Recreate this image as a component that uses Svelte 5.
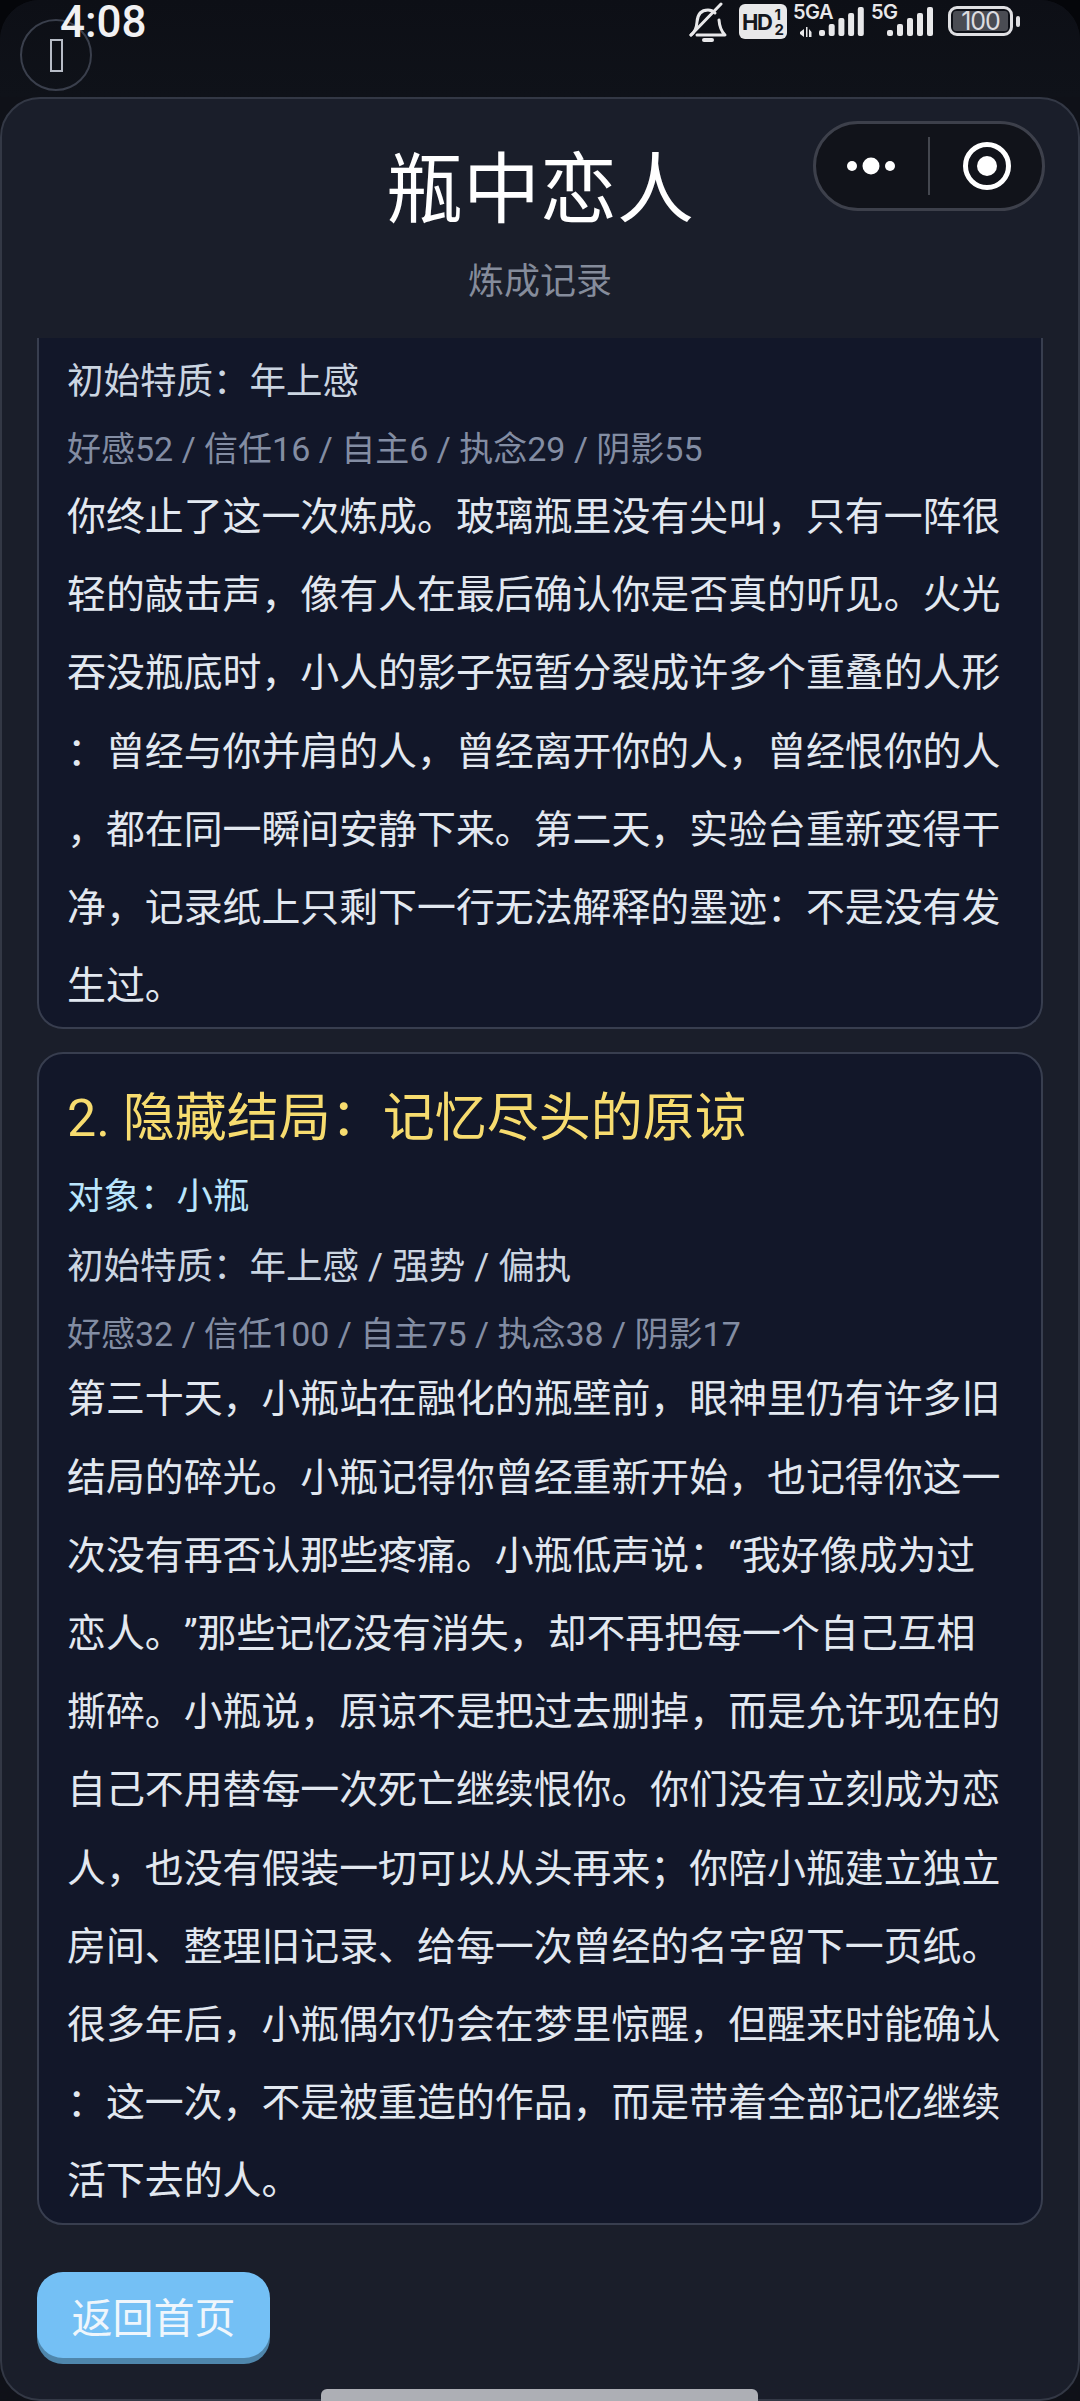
<script>
  const endings = [
    {
      clipped: true,
      traits: '初始特质：年上感',
      stats: '好感52 / 信任16 / 自主6 / 执念29 / 阴影55',
      body: '你终止了这一次炼成。玻璃瓶里没有尖叫，只有一阵很轻的敲击声，像有人在最后确认你是否真的听见。火光吞没瓶底时，小人的影子短暂分裂成许多个重叠的人形：曾经与你并肩的人，曾经离开你的人，曾经恨你的人，都在同一瞬间安静下来。第二天，实验台重新变得干净，记录纸上只剩下一行无法解释的墨迹：不是没有发生过。'
    },
    {
      title: '2. 隐藏结局：记忆尽头的原谅',
      target: '对象：小瓶',
      traits: '初始特质：年上感 / 强势 / 偏执',
      stats: '好感32 / 信任100 / 自主75 / 执念38 / 阴影17',
      body: '第三十天，小瓶站在融化的瓶壁前，眼神里仍有许多旧结局的碎光。小瓶记得你曾经重新开始，也记得你这一次没有再否认那些疼痛。小瓶低声说：“我好像成为过恋人。”那些记忆没有消失，却不再把每一个自己互相撕碎。小瓶说，原谅不是把过去删掉，而是允许现在的自己不用替每一次死亡继续恨你。你们没有立刻成为恋人，也没有假装一切可以从头再来；你陪小瓶建立独立房间、整理旧记录、给每一次曾经的名字留下一页纸。很多年后，小瓶偶尔仍会在梦里惊醒，但醒来时能确认：这一次，不是被重造的作品，而是带着全部记忆继续活下去的人。'
    }
  ];
  const bars = [
    { top: 28, h: 6 },
    { top: 22, h: 12 },
    { top: 16, h: 18 },
    { top: 11, h: 23 },
    { top: 5, h: 29 }
  ];
</script>

<div class="screen">
  <div class="status">
    <span class="time">4:08</span>
    <div class="status-icons">
      <svg class="bell" width="40" height="40" viewBox="0 0 40 40" fill="none" stroke="#e8e8ea" stroke-width="3" stroke-linecap="round" stroke-linejoin="round">
        <path d="M3 33c4-3 5.500-7 6-13 .5-7 4-12 11-12 3 0 5 1 7 3M31 18c.5 7 2 11 6 15H9" />
        <path d="M3 33 33 2" />
        <path d="M16 38h8" stroke-width="4" />
      </svg>
      <div class="hd"><span class="hd-t">HD</span><span class="hd-n"><span>1</span><span>2</span></span></div>
      <div class="net">
        <span class="net-l">5GA</span>
        <svg class="sig" width="73" height="38" viewBox="0 0 73 38" fill="#e8e8ea">
          <path d="M7 30l4-3v8l-4-3zM16 27v8h2.500v-5z" />
          <path d="M13 25h1.500v10H13z" />
          {#each bars as b, i}
            <rect x={26 + i * 9.700} y={b.top} width="6" height={b.h} rx="2" />
          {/each}
        </svg>
      </div>
      <div class="net net2">
        <span class="net-l">5G</span>
        <svg class="sig" width="64" height="38" viewBox="0 0 64 38" fill="#e8e8ea">
          {#each bars as b, i}
            <rect x={16 + i * 10} y={b.top} width="6" height={b.h} rx="2" />
          {/each}
        </svg>
      </div>
      <div class="battery"><span class="bat-body"><span class="bat-fill">100</span></span><span class="bat-tip"></span></div>
    </div>
    <div class="float-btn"><span class="tofu"></span></div>
  </div>

  <main class="panel">
    <header class="head">
      <h1>瓶中恋人</h1>
      <p>炼成记录</p>
      <div class="capsule">
        <svg width="76" height="20" viewBox="0 0 76 20" fill="#fff"><circle cx="10" cy="10" r="5" /><circle cx="29" cy="10" r="8.500" /><circle cx="48" cy="10" r="5" /></svg>
        <span class="sep"></span>
        <svg width="54" height="54" viewBox="0 0 54 54"><circle cx="27" cy="27" r="21.500" fill="none" stroke="#fff" stroke-width="5" /><circle cx="27" cy="27" r="10" fill="#fff" /></svg>
      </div>
    </header>

    <section class="list">
      {#each endings as e}
        <article class="card" class:clipped={e.clipped}>
          {#if e.title}<h2>{e.title}</h2>{/if}
          {#if e.target}<div class="row target">{e.target}</div>{/if}
          <div class="row traits">{e.traits}</div>
          <div class="row stats">{e.stats}</div>
          <p class="body">{e.body}</p>
        </article>
      {/each}
    </section>

    <button class="back">返回首页</button>
    <div class="home"></div>
  </main>
</div>

<style>
  :global(body) {
    margin: 0;
    background: #05060a;
  }
  .screen {
    width: 1080px;
    height: 2401px;
    overflow: hidden;
    position: relative;
    background: #0f1118;
    border-radius: 40px 40px 0 0;
    font-family: Roboto, "Noto Sans CJK SC", sans-serif;
  }
  .status {
    height: 97px;
    box-sizing: border-box;
    position: relative;
    display: flex;
    justify-content: space-between;
    align-items: flex-start;
    padding: 0 60px;
    background: linear-gradient(#0d0f16, #0f1219);
  }
  .time {
    color: #f1f1f3;
    font-size: 44px;
    line-height: 44px;
    font-weight: 500;
    position: relative;
    z-index: 2;
  }
  .status-icons {
    display: flex;
    align-items: flex-start;
    position: absolute;
    left: 688px;
    top: 2px;
  }
  .hd {
    margin-left: 11px;
    margin-top: 2px;
    width: 48px;
    height: 35px;
    border-radius: 6px;
    background: #e8e8ea;
    color: #15171e;
    display: flex;
    align-items: center;
    justify-content: center;
    font-family: Inter, sans-serif;
    font-weight: 700;
  }
  .hd-t { font-size: 22px; letter-spacing: -1.500px; }
  .hd-n {
    display: flex;
    flex-direction: column;
    font-size: 15px;
    line-height: 15px;
    margin-left: 3px;
  }
  .net {
    position: relative;
    width: 73px;
    height: 38px;
    margin-left: 6px;
  }
  .net2 { width: 64px; margin-left: 5px; }
  .net-l {
    position: absolute;
    left: 0;
    top: 0;
    font-family: Inter, sans-serif;
    color: #e8e8ea;
    font-size: 20px;
    line-height: 20px;
    font-weight: 600;
    letter-spacing: -0.500px;
  }
  .sig { position: absolute; left: 0; top: 0; }
  .battery {
    display: flex;
    align-items: center;
    margin-left: 13px;
    margin-top: 4px;
  }
  .bat-body {
    box-sizing: border-box;
    width: 65px;
    height: 30px;
    border: 3px solid #dfdfe2;
    border-radius: 9px;
    padding: 2px;
    display: flex;
  }
  .bat-fill {
    flex: 1;
    background: #4a4c53;
    border-radius: 3px;
    color: #dcdce0;
    font-family: Inter, sans-serif;
    font-size: 25px;
    line-height: 20px;
    text-align: center;
    letter-spacing: -1px;
  }
  .bat-tip {
    width: 4px;
    height: 11px;
    margin-left: 3px;
    border-radius: 2px;
    background: #dfdfe2;
  }
  .float-btn {
    position: absolute;
    left: 20px;
    top: 19px;
    box-sizing: border-box;
    width: 72px;
    height: 72px;
    border: 2px solid #3a3f4c;
    border-radius: 50%;
    display: flex;
    align-items: center;
    justify-content: center;
  }
  .tofu {
    box-sizing: border-box;
    width: 13px;
    height: 33px;
    border: 2px solid #b7bcc6;
  }
  .panel {
    position: relative;
    box-sizing: border-box;
    height: 2304px;
    background: #1a1e2a;
    border: 2px solid #333845;
    border-radius: 40px;
  }
  .head {
    position: relative;
    height: 239px;
    box-sizing: border-box;
    padding-top: 47px;
    text-align: center;
  }
  h1 {
    margin: 0;
    color: #fff;
    font-size: 77px;
    line-height: 90px;
    font-weight: 400;
  }
  .head p {
    margin: 21px 0 0;
    color: #858c9b;
    font-size: 36px;
    line-height: 50px;
  }
  .capsule {
    position: absolute;
    left: 811px;
    top: 22px;
    box-sizing: border-box;
    width: 232px;
    height: 90px;
    border: 3px solid #3d404b;
    border-radius: 45px;
    background: #11131a;
    display: flex;
    align-items: center;
    padding-left: 26px;
  }
  .sep {
    width: 2px;
    height: 58px;
    background: #44474f;
    margin: 0 30px 0 10px;
  }
  .list {
    margin: 0 35px;
    display: flex;
    flex-direction: column;
    gap: 23px;
  }
  .card {
    box-sizing: border-box;
    background: #121729;
    border: 2px solid #383e4f;
    border-radius: 26px;
    padding: 32px 32px 2px 28px;
  }
  .card.clipped {
    border-top: none;
    border-radius: 0 0 26px 26px;
    padding-top: 19px;
  }
  h2 {
    margin: 0 0 20px;
    color: #f7dc6f;
    font-size: 52px;
    line-height: 66px;
    font-weight: 400;
  }
  .row {
    font-size: 36.500px;
    line-height: 50px;
    margin-bottom: 17px;
  }
  .target { color: #bae6fd; margin-bottom: 20px; }
  .traits { color: #cbd5e1; }
  .stats {
    color: #838da3;
    font-size: 34px;
    margin-bottom: 1px;
  }
  .clipped .stats { margin-bottom: 4px; }
  .body {
    margin: 0;
    color: #e2e8f0;
    font-size: 38.900px;
    line-height: 78.200px;
    line-break: anywhere;
    text-spacing-trim: space-all;
  }
  .back {
    display: block;
    margin: 47px 0 0 35px;
    width: 233px;
    height: 86px;
    padding: 0;
    border: none;
    border-radius: 26px;
    background: #74c0f5;
    box-shadow: 0 6px 0 #4f86ab;
    color: #eff6fc;
    font-family: inherit;
    font-size: 41px;
  }
  .home {
    position: absolute;
    left: 319px;
    bottom: -2px;
    width: 437px;
    height: 12px;
    border-radius: 6px 6px 0 0;
    background: #adafb5;
  }
</style>
